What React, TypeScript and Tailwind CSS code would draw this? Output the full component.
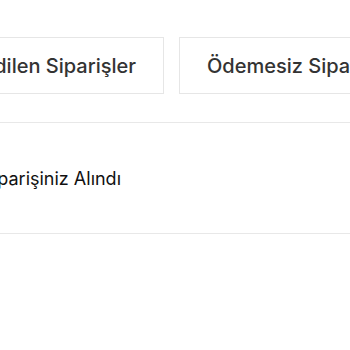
export default function App() {
  return (
    <div className="w-[350px] h-[350px] overflow-hidden bg-white" style={{ fontFamily: "Inter, 'Noto Sans', sans-serif" }}>
      <div className="flex pt-[37px]">
        <div className="w-[164px] shrink-0 flex justify-end">
          <div className="shrink-0 h-[57px] px-[27px] flex items-center border border-[#e6e6e6] text-[20px] font-medium text-[#333] whitespace-nowrap">
            Teslim Edilen Siparişler
          </div>
        </div>
        <div className="ml-[15px] shrink-0 h-[57px] px-[27px] flex items-center border border-[#e6e6e6] text-[20px] font-medium text-[#333] whitespace-nowrap">
          Ödemesiz Siparişler
        </div>
      </div>
      <div className="mt-[28px] border-t border-[#e8e8e8] h-[112px] border-b flex items-center">
        <div className="w-[121px] shrink-0 flex justify-end">
          <span className="shrink-0 whitespace-nowrap text-[18px] text-[#111]">Siparişiniz Alındı</span>
        </div>
      </div>
    </div>
  );
}
